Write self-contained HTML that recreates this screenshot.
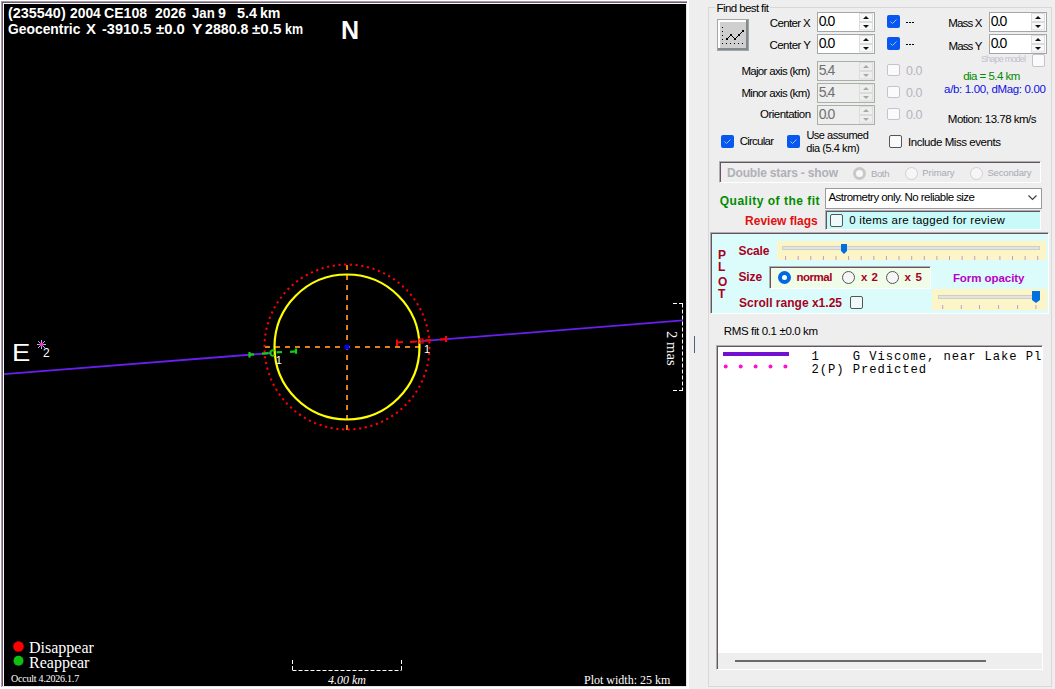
<!DOCTYPE html>
<html><head><meta charset="utf-8">
<style>
*{margin:0;padding:0;box-sizing:border-box}
html,body{width:1055px;height:689px;overflow:hidden;background:#fff}
body{position:relative;font-family:"Liberation Sans",sans-serif;}
.a{position:absolute;white-space:pre;line-height:1}
#plot{position:absolute;left:0;top:0;width:689px;height:689px;background:#fff}
#panel{position:absolute;left:689px;top:0;width:366px;height:689px;background:#eeeeee}
.w{color:#fff}
.serif{font-family:"Liberation Serif",serif}
.mono{font-family:"Liberation Mono",monospace}
.lbl{font-size:12px;color:#000}
.spin{position:absolute;background:#fff;border:1px solid #a0a8a8}
.spin .t{position:absolute;left:0.8px;top:1.2px;font-size:14px;line-height:1;letter-spacing:-1.5px;color:#000}
.spin .arr{position:absolute;left:-1px;top:-1px}
.spin.dis{background:transparent;border-color:#a8b0a8}
.spin.dis .t{color:#707070}
.dis0{color:#b4b4c0;font-size:12.5px;letter-spacing:-0.5px}
.cb{position:absolute;width:13px;height:13px;border-radius:2px;background:#0858f0}.cb svg{position:absolute;left:0;top:0}
.cbo{position:absolute;width:13px;height:13px;border:1px solid #555;border-radius:2px;background:#fafafa}
.cbd{position:absolute;width:13px;height:13px;border:1px solid #c8c0d0;border-radius:2px;background:#fafafa}
.rb{position:absolute;width:13px;height:13px;border:1px solid #555;border-radius:50%;background:#f6f6f6}
.sunk{position:absolute;border-top:1px solid #a8b4a8;border-left:1px solid #a8b4a8;border-right:1px solid #fff;border-bottom:1px solid #fff;box-shadow:inset 1px 1px 0 #6a4e6a}
.dr{color:#a8001c;font-weight:bold}
</style></head><body>
<div id="plot">
  <div style="position:absolute;left:1px;top:1px;width:686px;height:686px;background:#e6e6e6"></div>
  <div style="position:absolute;left:1px;top:1px;width:686px;height:1px;background:#a89aa8"></div>
  <div style="position:absolute;left:1px;top:1px;width:1px;height:686px;background:#a89aa8"></div>
  <div style="position:absolute;left:2px;top:2px;width:685px;height:1px;background:#705a70"></div>
  <div style="position:absolute;left:2px;top:2px;width:1px;height:684px;background:#705a70"></div>
  <div style="position:absolute;left:3px;top:3px;width:683px;height:683px;background:#fff"></div>
  <div style="position:absolute;left:4px;top:4px;width:682px;height:682px;background:#000"></div>
  <svg style="position:absolute;left:0;top:0" width="689" height="689" viewBox="0 0 689 689">
    <!-- purple chord line -->
    <line x1="4" y1="374.2" x2="272" y2="353" stroke="#6a1ef0" stroke-width="1.8"/>
    <line x1="421" y1="341.2" x2="683" y2="320.45" stroke="#6a1ef0" stroke-width="1.8"/>
    <!-- orange dashed axes -->
    <line x1="265" y1="347" x2="421" y2="347" stroke="#e0801c" stroke-width="2" stroke-dasharray="5 5"/>
    <line x1="347" y1="265" x2="347" y2="430" stroke="#e0801c" stroke-width="2" stroke-dasharray="5 5"/>
    <!-- red dotted predicted circle -->
    <circle cx="347" cy="347" r="82.5" fill="none" stroke="#ff0000" stroke-width="2" stroke-dasharray="2.2 3.55"/>
    <!-- yellow circle -->
    <circle cx="347" cy="347" r="72.5" fill="none" stroke="#ffff00" stroke-width="2.2"/>
    <circle cx="347" cy="347" r="2.6" fill="#0000ff"/>
    <!-- red disappear event -->
    <g stroke="#ff0000" stroke-width="2" fill="none">
      <line x1="396" y1="342.5" x2="403" y2="342"/>
      <line x1="397" y1="339.5" x2="397" y2="346"/>
      <line x1="410" y1="342" x2="417" y2="341.5"/>
      <rect x="419" y="339" width="4" height="4" stroke-width="1.2"/>
      <line x1="425" y1="340.5" x2="431" y2="340"/>
      <line x1="440" y1="339.5" x2="447" y2="339"/>
      <line x1="446" y1="336" x2="446" y2="342"/>
    </g>
    <!-- green reappear event -->
    <g stroke="#10d010" stroke-width="2.2" fill="none">
      <line x1="249" y1="354.6" x2="254" y2="354.3"/>
      <line x1="249.5" y1="352" x2="249.5" y2="357.6"/>
      <line x1="262" y1="353.6" x2="268.5" y2="353.2"/>
      <path d="M274.5,351 A2.6,2.6 0 1 0 274.5,355" stroke-width="1.8"/>
      <line x1="276.5" y1="352.4" x2="282" y2="352"/>
      <line x1="290" y1="351.8" x2="296" y2="351.4"/>
      <line x1="296" y1="348.5" x2="296" y2="353.8"/>
    </g>
    <!-- star -->
    <g stroke="#b0b8e8" stroke-width="1">
      <line x1="37" y1="344.5" x2="46" y2="344.5"/>
      <line x1="41.5" y1="340" x2="41.5" y2="349"/>
      <line x1="38" y1="341" x2="45" y2="348"/>
      <line x1="45" y1="341" x2="38" y2="348"/>
    </g>
    <circle cx="41.5" cy="344.5" r="2" fill="#ff30c0"/>
    <!-- 2 mas bar -->
    <g stroke="#fff" stroke-width="1" fill="none">
      <line x1="682.5" y1="303.5" x2="682.5" y2="390.5" stroke-dasharray="4 2"/>
      <line x1="673" y1="303.5" x2="683" y2="303.5" stroke-dasharray="4 2"/>
      <line x1="673" y1="390.5" x2="683" y2="390.5" stroke-dasharray="4 2"/>
    </g>
    <!-- 4 km bar -->
    <g stroke="#fff" stroke-width="1" fill="none">
      <line x1="292.5" y1="670.5" x2="401.5" y2="670.5" stroke-dasharray="4 2"/>
      <line x1="292.5" y1="660" x2="292.5" y2="670.5" stroke-dasharray="4 2"/>
      <line x1="401.5" y1="660" x2="401.5" y2="670.5" stroke-dasharray="4 2"/>
    </g>
    <circle cx="18.5" cy="646.5" r="5.3" fill="#ff0000"/>
    <circle cx="18.5" cy="660.7" r="5" fill="#10c010"/>
  </svg>
  <div class="a w pw" id="pw0_0" style="left:7.78px;top:5.9px;font-size:14px;font-weight:bold;transform-origin:0 0;transform:scaleX(1.0292)">(235540)</div>
  <div class="a w pw" id="pw0_1" style="left:69.60px;top:5.9px;font-size:14px;font-weight:bold;transform-origin:0 0;transform:scaleX(0.9882)">2004</div>
  <div class="a w pw" id="pw0_2" style="left:104.18px;top:5.9px;font-size:14px;font-weight:bold;transform-origin:0 0;transform:scaleX(1.0052)">CE108</div>
  <div class="a w pw" id="pw0_3" style="left:155.48px;top:5.9px;font-size:14px;font-weight:bold;transform-origin:0 0;transform:scaleX(0.9960)">2026</div>
  <div class="a w pw" id="pw0_4" style="left:192.08px;top:5.9px;font-size:14px;font-weight:bold;transform-origin:0 0;transform:scaleX(0.9417)">Jan</div>
  <div class="a w pw" id="pw0_5" style="left:217.72px;top:5.9px;font-size:14px;font-weight:bold;transform-origin:0 0;transform:scaleX(1.0159)">9</div>
  <div class="a w pw" id="pw0_6" style="left:236.89px;top:5.9px;font-size:14px;font-weight:bold;transform-origin:0 0;transform:scaleX(1.0302)">5.4</div>
  <div class="a w pw" id="pw0_7" style="left:259.89px;top:5.9px;font-size:14px;font-weight:bold;transform-origin:0 0;transform:scaleX(1.0106)">km</div>
  <div class="a w pw" id="pw1_0" style="left:7.80px;top:22.4px;font-size:14px;font-weight:bold;transform-origin:0 0;transform:scaleX(0.9891)">Geocentric</div>
  <div class="a w pw" id="pw1_1" style="left:85.69px;top:22.4px;font-size:14px;font-weight:bold;transform-origin:0 0;transform:scaleX(1.0671)">X</div>
  <div class="a w pw" id="pw1_2" style="left:101.69px;top:22.4px;font-size:14px;font-weight:bold;transform-origin:0 0;transform:scaleX(1.0388)">-3910.5</div>
  <div class="a w pw" id="pw1_3" style="left:155.52px;top:22.4px;font-size:14px;font-weight:bold;transform-origin:0 0;transform:scaleX(1.0593)">±0.0</div>
  <div class="a w pw" id="pw1_4" style="left:192.03px;top:22.4px;font-size:14px;font-weight:bold;transform-origin:0 0;transform:scaleX(1.1137)">Y</div>
  <div class="a w pw" id="pw1_5" style="left:204.79px;top:22.4px;font-size:14px;font-weight:bold;transform-origin:0 0;transform:scaleX(1.0140)">2880.8</div>
  <div class="a w pw" id="pw1_6" style="left:252.31px;top:22.4px;font-size:14px;font-weight:bold;transform-origin:0 0;transform:scaleX(1.0817)">±0.5</div>
  <div class="a w pw" id="pw1_7" style="left:285.13px;top:22.4px;font-size:14px;font-weight:bold;transform-origin:0 0;transform:scaleX(0.8900)">km</div>
  <div class="a w" style="left:341px;top:18px;font-size:25px;font-weight:bold">N</div>
  <div class="a w" style="left:12px;top:340.8px;font-size:24.5px;transform-origin:0 0;transform:scaleX(1.12)">E</div>
  <div class="a w" style="left:43px;top:347px;font-size:12px">2</div>
  <div class="a w" style="left:275.7px;top:355.2px;font-size:11px">1</div>
  <div class="a w" style="left:424px;top:344.2px;font-size:11px">1</div>
  <div class="a w serif" style="left:665px;top:331px;font-size:14.7px;transform-origin:0 0;transform:translate(14px,0) rotate(90deg)">2 mas</div>
  <div class="a w serif" style="left:29px;top:639.5px;font-size:16px">Disappear</div>
  <div class="a w serif" style="left:29px;top:654.5px;font-size:16px">Reappear</div>
  <div class="a w serif" style="left:11px;top:674px;font-size:10px;letter-spacing:-0.22px">Occult 4.2026.1.7</div>
  <div class="a w serif" style="left:328px;top:674px;font-size:12px;font-style:italic">4.00 km</div>
  <div class="a w serif" style="left:584px;top:674px;font-size:12px">Plot width: 25 km</div>
</div>
<div id="panel"></div>
<div id="ui" style="position:absolute;left:0;top:0;width:1055px;height:689px">
  <!-- outer group box -->
  <div style="position:absolute;left:708px;top:7px;width:344px;height:680px;border:1px solid #d8d8d8"></div>
  <div class="a lbl" id="t_find" style="left:714.60px;top:2.50px;font-size:11.5px;background:#eeeeee;padding:0 2px;letter-spacing:-0.600px">Find best fit</div>
  <!-- button -->
  <div style="position:absolute;left:717px;top:19px;width:32px;height:32px;background:#cfcfcf;border:1px solid #a0a8a0"></div>
  <div style="position:absolute;left:718px;top:20px;width:30px;height:2px;background:#fff"></div>
  <div style="position:absolute;left:718px;top:20px;width:2px;height:29px;background:#fff"></div>
  <div style="position:absolute;left:746px;top:20px;width:2px;height:30px;background:#808a90"></div>
  <div style="position:absolute;left:718px;top:48px;width:30px;height:2px;background:#808a90"></div>
  <svg style="position:absolute;left:717px;top:19px" width="32" height="32" viewBox="0 0 32 32">
    <g fill="#000">
      <rect x="5" y="8" width="1" height="1"/><rect x="5" y="12" width="1" height="1"/><rect x="5" y="16" width="1" height="1"/><rect x="5" y="20" width="1" height="1"/><rect x="5" y="24" width="1" height="1"/>
      <rect x="9" y="24" width="1" height="1"/><rect x="13" y="24" width="1" height="1"/><rect x="17" y="24" width="1" height="1"/><rect x="21" y="24" width="1" height="1"/><rect x="25" y="24" width="1" height="1"/>
      <rect x="9" y="19" width="2" height="2"/><rect x="13" y="15" width="2" height="2"/><rect x="17" y="19" width="2" height="2"/><rect x="21" y="15" width="2" height="2"/><rect x="25" y="11" width="2" height="2"/>
    </g>
    <polyline points="10,20 14,16 18,20 22,16 26,12" fill="none" stroke="#000" stroke-width="1"/>
  </svg>

  <!-- row Center X -->
  <div class="a lbl" id="t_cx" style="left:769.70px;top:17.80px;font-size:11.5px;letter-spacing:-0.614px">Center X</div>
  <div class="spin" style="left:817px;top:12px;width:58px;height:20px"><div class="t">0.0</div><svg class="arr" width="58" height="20"><rect x="42.5" y="1.5" width="13" height="8" fill="#f8f8f8" stroke="#dcdcdc"/><rect x="42.5" y="10.5" width="13" height="7.5" fill="#f8f8f8" stroke="#dcdcdc"/><path d="M46,7 L49,4 L52,7 Z" fill="#111"/><path d="M46,13 L52,13 L49,16 Z" fill="#111"/></svg></div>
  <div class="cb" style="left:887px;top:15px"><svg width="13" height="13"><polyline points="3.5,6.5 5.5,8.5 9.5,4.5" fill="none" stroke="#90c8ff" stroke-width="1"/></svg></div>
  <div style="position:absolute;left:906px;top:22px;width:9px;height:1px;background:repeating-linear-gradient(90deg,#000 0 2px,transparent 2px 3px)"></div>
  <div class="a lbl" id="t_cy" style="left:769.40px;top:40.00px;font-size:11.5px;letter-spacing:-0.513px">Center Y</div>
  <div class="spin" style="left:817px;top:34px;width:58px;height:20px"><div class="t">0.0</div><svg class="arr" width="58" height="20"><rect x="42.5" y="1.5" width="13" height="8" fill="#f8f8f8" stroke="#dcdcdc"/><rect x="42.5" y="10.5" width="13" height="7.5" fill="#f8f8f8" stroke="#dcdcdc"/><path d="M46,7 L49,4 L52,7 Z" fill="#111"/><path d="M46,13 L52,13 L49,16 Z" fill="#111"/></svg></div>
  <div class="cb" style="left:887px;top:37px"><svg width="13" height="13"><polyline points="3.5,6.5 5.5,8.5 9.5,4.5" fill="none" stroke="#90c8ff" stroke-width="1"/></svg></div>
  <div style="position:absolute;left:906px;top:44px;width:9px;height:1px;background:repeating-linear-gradient(90deg,#000 0 2px,transparent 2px 3px)"></div>

  <div class="a lbl" id="t_mx" style="left:948.20px;top:18.00px;font-size:11.5px;letter-spacing:-0.820px">Mass X</div>
  <div class="spin" style="left:989px;top:12px;width:58px;height:20px"><div class="t">0.0</div><svg class="arr" width="58" height="20"><rect x="42.5" y="1.5" width="13" height="8" fill="#f8f8f8" stroke="#dcdcdc"/><rect x="42.5" y="10.5" width="13" height="7.5" fill="#f8f8f8" stroke="#dcdcdc"/><path d="M46,7 L49,4 L52,7 Z" fill="#111"/><path d="M46,13 L52,13 L49,16 Z" fill="#111"/></svg></div>
  <div class="a lbl" id="t_my" style="left:948.40px;top:40.50px;font-size:11.5px;letter-spacing:-0.840px">Mass Y</div>
  <div class="spin" style="left:989px;top:34px;width:58px;height:20px"><div class="t">0.0</div><svg class="arr" width="58" height="20"><rect x="42.5" y="1.5" width="13" height="8" fill="#f8f8f8" stroke="#dcdcdc"/><rect x="42.5" y="10.5" width="13" height="7.5" fill="#f8f8f8" stroke="#dcdcdc"/><path d="M46,7 L49,4 L52,7 Z" fill="#111"/><path d="M46,13 L52,13 L49,16 Z" fill="#111"/></svg></div>
  <div class="a" id="t_shape" style="left:980.90px;top:54.90px;font-size:9px;color:#c4c0d0;letter-spacing:-0.790px">Shape model</div>
  <div class="cbd" style="left:1032px;top:54px;width:13px;height:13px"></div>

  <div class="a lbl" id="t_maj" style="left:741.40px;top:65.90px;font-size:11.5px;letter-spacing:-0.685px">Major axis (km)</div>
  <div class="spin dis" style="left:817px;top:61px;width:58px;height:20px"><div class="t">5.4</div><svg class="arr" width="58" height="20"><rect x="42.5" y="1.5" width="13" height="8" fill="none" stroke="#dcdcdc"/><rect x="42.5" y="10.5" width="13" height="7.5" fill="none" stroke="#dcdcdc"/><path d="M46,7 L49,4 L52,7 Z" fill="#a8a8a8"/><path d="M46,13 L52,13 L49,16 Z" fill="#a8a8a8"/></svg></div>
  <div class="cbd" style="left:887px;top:64px;height:12px"></div>
  <div class="a lbl dis0" style="left:906px;top:65px">0.0</div>
  <div class="a lbl" id="t_min" style="left:741.40px;top:88.00px;font-size:11.5px;letter-spacing:-0.685px">Minor axis (km)</div>
  <div class="spin dis" style="left:817px;top:83px;width:58px;height:20px"><div class="t">5.4</div><svg class="arr" width="58" height="20"><rect x="42.5" y="1.5" width="13" height="8" fill="none" stroke="#dcdcdc"/><rect x="42.5" y="10.5" width="13" height="7.5" fill="none" stroke="#dcdcdc"/><path d="M46,7 L49,4 L52,7 Z" fill="#a8a8a8"/><path d="M46,13 L52,13 L49,16 Z" fill="#a8a8a8"/></svg></div>
  <div class="cbd" style="left:887px;top:86px;height:12px"></div>
  <div class="a lbl dis0" style="left:906px;top:87px">0.0</div>
  <div class="a lbl" id="t_ori" style="left:760.00px;top:109.00px;font-size:11.5px;letter-spacing:-0.520px">Orientation</div>
  <div class="spin dis" style="left:817px;top:105px;width:58px;height:20px"><div class="t">0.0</div><svg class="arr" width="58" height="20"><rect x="42.5" y="1.5" width="13" height="8" fill="none" stroke="#dcdcdc"/><rect x="42.5" y="10.5" width="13" height="7.5" fill="none" stroke="#dcdcdc"/><path d="M46,7 L49,4 L52,7 Z" fill="#a8a8a8"/><path d="M46,13 L52,13 L49,16 Z" fill="#a8a8a8"/></svg></div>
  <div class="cbd" style="left:887px;top:108px;height:12px"></div>
  <div class="a lbl dis0" style="left:906px;top:109px">0.0</div>

  <div class="a lbl" id="t_dia" style="left:963.20px;top:71.00px;color:#008a00;font-size:11.5px;letter-spacing:-0.528px">dia = 5.4 km</div>
  <div class="a lbl" id="t_ab" style="left:944.10px;top:84.00px;color:#1010e0;font-size:11.5px;letter-spacing:-0.345px">a/b: 1.00, dMag: 0.00</div>
  <div class="a lbl" id="t_mot" style="left:947.80px;top:113.80px;font-size:11.5px;letter-spacing:-0.494px">Motion: 13.78 km/s</div>

  <div class="cb" style="left:721px;top:135px"><svg width="13" height="13"><polyline points="3.5,6.5 5.5,8.5 9.5,4.5" fill="none" stroke="#90c8ff" stroke-width="1"/></svg></div>
  <div class="a lbl" id="t_circ" style="left:739.70px;top:136.40px;font-size:11.5px;letter-spacing:-0.757px">Circular</div>
  <div class="cb" style="left:787px;top:135px"><svg width="13" height="13"><polyline points="3.5,6.5 5.5,8.5 9.5,4.5" fill="none" stroke="#90c8ff" stroke-width="1"/></svg></div>
  <div class="a lbl" id="t_use" style="left:806.40px;top:130.20px;font-size:11px;letter-spacing:-0.480px">Use assumed</div>
  <div class="a lbl" id="t_dia2" style="left:806.20px;top:143.00px;font-size:11px;letter-spacing:-0.427px">dia (5.4 km)</div>
  <div class="cbo" style="left:889px;top:135px"></div>
  <div class="a lbl" id="t_miss" style="left:908.00px;top:136.90px;font-size:11.5px;letter-spacing:-0.444px">Include Miss events</div>

  <!-- double stars -->
  <div class="sunk" style="left:719px;top:161px;width:322px;height:22px"></div>
  <div class="a" id="t_dbl" style="left:727.00px;top:166.80px;font-size:12px;font-weight:bold;color:#b0b0b8;letter-spacing:-0.167px">Double stars - show</div>
  <div class="rb" style="left:853px;top:167px;border-color:#c8c8c8;border-width:3px;background:#f8f8f8"></div>
  <div class="a" id="t_both" style="left:870.90px;top:169.40px;font-size:9.5px;color:#a8a8b4;letter-spacing:-0.333px">Both</div>
  <div class="rb" style="left:905px;top:167px;border-color:#d0d0d0"></div>
  <div class="a" id="t_prim" style="left:922.30px;top:168.00px;font-size:9.5px;color:#a8a8b4;letter-spacing:-0.083px">Primary</div>
  <div class="rb" style="left:970px;top:167px;border-color:#d0d0d0"></div>
  <div class="a" id="t_sec" style="left:987.40px;top:168.00px;font-size:9.5px;color:#a8a8b4;letter-spacing:-0.161px">Secondary</div>

  <div class="a" id="t_qual" style="left:719.80px;top:195.10px;font-size:12px;font-weight:bold;color:#008c00;letter-spacing:0.494px">Quality of the fit</div>
  <div style="position:absolute;left:825px;top:188px;width:217px;height:21px;background:#fff;border:1px solid #9a9a9a"></div>
  <div class="a lbl" id="t_astro" style="left:828.50px;top:191.90px;font-size:11.5px;letter-spacing:-0.550px">Astrometry only. No reliable size</div>
  <svg style="position:absolute;left:1028px;top:195px" width="10" height="7" viewBox="0 0 10 7"><polyline points="0.5,0.5 4.5,4.5 8.5,0.5" fill="none" stroke="#404040" stroke-width="1.2"/></svg>
  <div class="a" id="t_rev" style="left:745.10px;top:215.10px;font-size:12px;font-weight:bold;color:#e01010;letter-spacing:0.000px">Review flags</div>
  <div class="sunk" style="left:825px;top:210px;width:216px;height:20px;background:#c8fafa"></div>
  <div class="cbo" style="left:830px;top:214px;width:13px;height:13px;background:#eefafa"></div>
  <div class="a lbl" id="t_items" style="left:849.20px;top:215.30px;font-size:11.5px;letter-spacing:0.265px">0 items are tagged for review</div>

  <!-- PLOT panel -->
  <div class="sunk" style="left:710px;top:232px;width:339px;height:82px;background:#dcfcfc"></div>
  <div class="a dr" id="t_P" style="left:718.00px;top:249.10px;font-size:12px;letter-spacing:2.400px">P</div>
  <div class="a dr" id="t_L" style="left:718.00px;top:261.00px;font-size:12px;letter-spacing:5.400px">L</div>
  <div class="a dr" id="t_O" style="left:718.00px;top:275.50px;font-size:12px;letter-spacing:-0.600px">O</div>
  <div class="a dr" id="t_T" style="left:718.00px;top:288.00px;font-size:12px;letter-spacing:2.400px">T</div>
  <div class="a dr" id="t_scale" style="left:738.50px;top:245.00px;font-size:12px;letter-spacing:-0.100px">Scale</div>
  <div style="position:absolute;left:777px;top:241px;width:269px;height:19px;background:#fcf5c8"></div>
  <div style="position:absolute;left:782px;top:246px;width:258px;height:4px;background:#e4e4dc;border:1px solid #c8d0c8"></div>
  <svg style="position:absolute;left:840px;top:243px" width="9" height="12" viewBox="0 0 9 12"><path d="M1,1 H7 V8 L4,11 L1,8 Z" fill="#0070e0"/></svg>
  <svg style="position:absolute;left:777px;top:256px" width="270" height="5"><rect x="8.1" y="0" width="1" height="4" fill="#c898c8"/><rect x="20.7" y="0" width="1" height="4" fill="#c898c8"/><rect x="33.3" y="0" width="1" height="4" fill="#c898c8"/><rect x="45.9" y="0" width="1" height="4" fill="#c898c8"/><rect x="58.5" y="0" width="1" height="4" fill="#c898c8"/><rect x="71.1" y="0" width="1" height="4" fill="#c898c8"/><rect x="83.7" y="0" width="1" height="4" fill="#c898c8"/><rect x="96.3" y="0" width="1" height="4" fill="#c898c8"/><rect x="108.9" y="0" width="1" height="4" fill="#c898c8"/><rect x="121.5" y="0" width="1" height="4" fill="#c898c8"/><rect x="134.2" y="0" width="1" height="4" fill="#c898c8"/><rect x="146.8" y="0" width="1" height="4" fill="#c898c8"/><rect x="159.4" y="0" width="1" height="4" fill="#c898c8"/><rect x="172.0" y="0" width="1" height="4" fill="#c898c8"/><rect x="184.6" y="0" width="1" height="4" fill="#c898c8"/><rect x="197.2" y="0" width="1" height="4" fill="#c898c8"/><rect x="209.8" y="0" width="1" height="4" fill="#c898c8"/><rect x="222.4" y="0" width="1" height="4" fill="#c898c8"/><rect x="235.0" y="0" width="1" height="4" fill="#c898c8"/><rect x="247.6" y="0" width="1" height="4" fill="#c898c8"/><rect x="260.2" y="0" width="1" height="4" fill="#c898c8"/></svg>
  <div class="a dr" id="t_size" style="left:738.50px;top:271.00px;font-size:12px;letter-spacing:-0.133px">Size</div>
  <div class="sunk" style="left:769px;top:266px;width:162px;height:23px;background:#effce8"></div>
  <div class="rb" style="left:778px;top:271px;border:4px solid #0068e0;background:#fff"></div>
  <div class="a dr" id="t_normal" style="left:796.40px;top:272.30px;font-size:11.5px;letter-spacing:-0.480px">normal</div>
  <div class="rb" style="left:842px;top:271px"></div>
  <div class="a dr" id="t_x2" style="left:861.00px;top:272.30px;font-size:11.5px;letter-spacing:0.400px">x 2</div>
  <div class="rb" style="left:886px;top:271px"></div>
  <div class="a dr" id="t_x5" style="left:904.60px;top:272.30px;font-size:11.5px;letter-spacing:0.700px">x 5</div>
  <div class="a" id="t_form" style="left:952.90px;top:272.50px;font-size:11.5px;font-weight:bold;color:#b800c8;letter-spacing:-0.056px">Form opacity</div>
  <div style="position:absolute;left:932px;top:289px;width:115px;height:21px;background:#fcf5c8"></div>
  <div style="position:absolute;left:938px;top:295px;width:102px;height:4px;background:#e4e4dc;border:1px solid #c8d0c8"></div>
  <svg style="position:absolute;left:1031px;top:290px" width="10" height="14" viewBox="0 0 10 14"><path d="M1,1 H9 V10 L5,13 L1,10 Z" fill="#0070e0"/></svg>
  <svg style="position:absolute;left:932px;top:305px" width="115" height="5"><rect x="10.2" y="0" width="1" height="4" fill="#c898c8"/><rect x="28.8" y="0" width="1" height="4" fill="#c898c8"/><rect x="47.0" y="0" width="1" height="4" fill="#c898c8"/><rect x="66.1" y="0" width="1" height="4" fill="#c898c8"/><rect x="85.1" y="0" width="1" height="4" fill="#c898c8"/><rect x="103.4" y="0" width="1" height="4" fill="#c898c8"/></svg>
  <div class="a dr" id="t_scroll" style="left:739.10px;top:297.10px;font-size:12px;letter-spacing:0.010px">Scroll range x1.25</div>
  <div class="cbo" style="left:850px;top:296px;width:13px;height:13px;background:#eefafa"></div>

  <div class="a lbl" id="t_rms" style="left:723.80px;top:326.20px;font-size:11.5px;letter-spacing:-0.368px">RMS fit 0.1 ±0.0 km</div>
  <!-- splitter grip -->
  <div style="position:absolute;left:694px;top:336px;width:1px;height:17px;background:#506080"></div>

  <!-- listbox -->
  <div class="sunk" style="left:716px;top:345px;width:327px;height:325px;background:#fff"></div>
  <div style="position:absolute;left:718px;top:653px;width:324px;height:16px;background:#eeeeee"></div>
  <div style="position:absolute;left:735px;top:660px;width:251px;height:2px;background:#6a6a6a"></div>
  <div style="position:absolute;left:723px;top:352px;width:66px;height:4px;background:#7010d0"></div>
  <svg style="position:absolute;left:720px;top:362px" width="72" height="8">
    <circle cx="5.7" cy="4.4" r="2" fill="#ff10d0"/><circle cx="20.7" cy="4.4" r="2" fill="#ff10d0"/><circle cx="35.6" cy="4.4" r="2" fill="#ff10d0"/><circle cx="50.5" cy="4.4" r="2" fill="#ff10d0"/><circle cx="65.4" cy="4.4" r="2" fill="#ff10d0"/>
  </svg>
  <div class="a mono" id="t_l1" style="left:811.5px;top:350.8px;font-size:12.2px;letter-spacing:0.93px;width:229px;overflow:hidden">1    G Viscome, near Lake Placid</div>
  <div class="a mono" id="t_l2" style="left:811.5px;top:363.8px;font-size:12.2px;letter-spacing:0.93px">2(P) Predicted</div>
</div>

</body></html>
